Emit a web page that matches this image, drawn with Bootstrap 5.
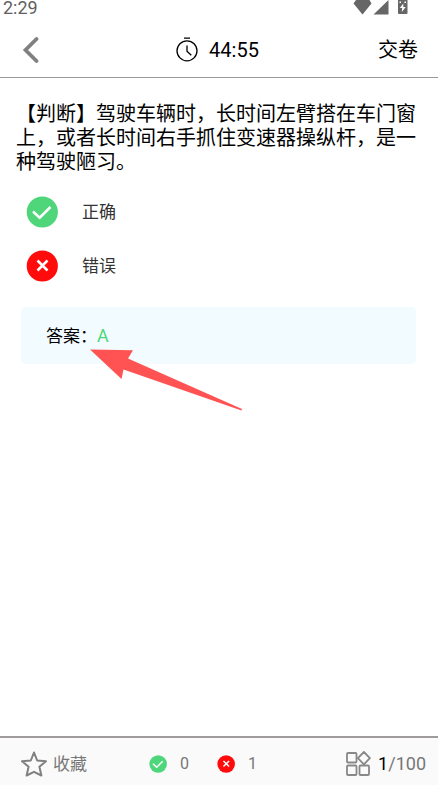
<!DOCTYPE html>
<html lang="zh-CN">
<head>
<meta charset="utf-8">
<meta name="viewport" content="width=device-width, initial-scale=1">
<title>模拟考试</title>
<link href="https://cdn.jsdelivr.net/npm/bootstrap@5.3.0/dist/css/bootstrap.min.css" rel="stylesheet">
<style>
body { font-family: Roboto, "Noto Sans CJK SC", sans-serif; color: #000; background: #fff; }
svg { display: block; flex: none; }
.plain-btn { background: none; border: 0; padding: 0; color: inherit; text-align: left; }
.status-bar { height: 22px; padding: 0 30px 0 3px; color: #606060; font-size: 18px; line-height: 16px; }
.exam-head { height: 56px; padding: 0 20px 0 17px; border-bottom: 1px solid #999; font-size: 20px; line-height: 24px; }
.side { flex: 1 1 0; }
.back { padding-left: 5px; }
.timer { gap: 11px; }
.exam-body { padding: 24px 22px 0 16px; }
.question { font-size: 20px; line-height: 24px; margin-bottom: 11px; }
.option { height: 54px; padding-left: 10px; gap: 24px; font-size: 17px; color: #333; }
.option span { padding-top: 2px; }
.answer { margin: 14px 0 0 5px; padding: 17px 25px 16px; background: #f2fbff; border-radius: 5px; font-size: 17px; line-height: 24px; }
.green { color: #4fd67a; font-size: 18px; }
.pointer { left: 69px; top: 42px; }
.exam-foot { height: 49px; padding: 4px 12px 0 20px; background: #fafafa; border-top: 2px solid #9f9a9b; color: #777; font-size: 17px; line-height: 24px; }
.fav { gap: 5px; }
.counts { gap: 28px; margin-right: 26px; padding-top: 1px; }
.count { font-size: 16px; gap: 13px; }
.pages { font-size: 18px; gap: 7px; }
</style>
<script defer src="https://cdn.jsdelivr.net/npm/bootstrap@5.3.0/dist/js/bootstrap.bundle.min.js"></script>
</head>
<body class="d-flex flex-column min-vh-100">
<svg class="d-none" aria-hidden="true">
  <symbol id="ok" viewBox="0 0 32 32"><circle cx="16.300" cy="16" r="15.600" fill="#4fd67a"/><path d="M7 15.500l6.700 6.200L24.500 11" fill="none" stroke="#fff" stroke-width="2.500"/></symbol>
  <symbol id="no" viewBox="0 0 32 32"><circle cx="16.300" cy="16" r="15.600" fill="#ff0b0b"/><path d="M11.500 10.500l10 10m0-10l-10 10" fill="none" stroke="#fff" stroke-width="2.600"/></symbol>
</svg>

<div class="status-bar d-flex justify-content-between">
  <span>2:29</span>
  <svg width="55" height="16" viewBox="0 0 55 16" fill="#666" aria-hidden="true">
    <path d="M3 0h13.500l2 3.500L9.500 14.500 .5 3.500z"/>
    <path d="M20.500 14.500L35.500 0v14.500z"/>
    <path d="M45 0h9.500v13a1 1 0 0 1-1 1h-7.500a1 1 0 0 1-1-1z"/><path d="M50.300 3.500L46.800 8h2.400l-.4 4L52.700 7h-2.400z" fill="#fff"/><path d="M46.500 1.500h1.500V3h-1.500zM51.500 1.500H53V3h-1.500z" fill="#fff"/>
  </svg>
</div>

<header class="exam-head d-flex align-items-center">
  <div class="side d-flex">
    <button type="button" class="plain-btn back" aria-label="返回">
      <svg width="18" height="26" viewBox="0 0 18 26"><path d="M14.500 2L3.500 13l11 11" fill="none" stroke="#808080" stroke-width="3.800" stroke-linecap="round"/></svg>
    </button>
  </div>
  <div class="timer d-flex align-items-center">
    <svg width="22" height="26" viewBox="0 0 22 26" fill="none" stroke="#000" stroke-width="1.300" aria-hidden="true"><circle cx="11" cy="13.800" r="10"/><path d="M8 1.200h6M11 8.500v5.800l4.300 4"/></svg>
    <span>44:55</span>
  </div>
  <div class="side text-end"><button type="button" class="plain-btn">交卷</button></div>
</header>

<main class="exam-body flex-grow-1">
  <p class="question">【判断】驾驶车辆时，长时间左臂搭在车门窗上，或者长时间右手抓住变速器操纵杆，是一种驾驶陋习。</p>
  <button type="button" class="plain-btn option d-flex align-items-center w-100"><svg width="32" height="32"><use href="#ok"/></svg><span>正确</span></button>
  <button type="button" class="plain-btn option d-flex align-items-center w-100"><svg width="32" height="32"><use href="#no"/></svg><span>错误</span></button>
  <div class="answer position-relative">答案：<span class="green">A</span>
    <svg class="pointer position-absolute" width="154" height="62" viewBox="0 0 154 62" aria-hidden="true"><path d="M0 0.500L43 1.200 38 9.500 152 60 151.500 61.500 33.500 20.500 31.500 30z" fill="#ff5353"/></svg>
  </div>
</main>

<footer class="exam-foot d-flex align-items-center justify-content-between">
  <button type="button" class="plain-btn fav d-flex align-items-center">
    <svg width="28" height="28" viewBox="0 0 28 28" fill="none" stroke="#808080" stroke-width="2" stroke-linejoin="round"><path d="M14 2.500l3.200 8 8.800.7-6.600 5.600 2 8.700-7.400-3.700-7.400 3.700 2-8.700L2 11.200l8.800-.7z"/></svg>
    <span>收藏</span>
  </button>
  <div class="counts d-flex">
    <span class="count d-flex align-items-center"><svg width="18" height="18" aria-label="答对"><use href="#ok"/></svg>0</span>
    <span class="count d-flex align-items-center"><svg width="18" height="18" aria-label="答错"><use href="#no"/></svg>1</span>
  </div>
  <button type="button" class="plain-btn pages d-flex align-items-center">
    <svg width="26" height="26" viewBox="0 0 26 26" fill="none" stroke="#888" stroke-width="1.800" stroke-linejoin="round"><rect x="2" y="2" width="9.500" height="9.500" rx="1"/><rect x="2" y="14.500" width="9.500" height="9.500" rx="1"/><rect x="14.500" y="14.500" width="9.500" height="9.500" rx="1"/><path d="M18.900 1l6 6.200-6 6.200-6-6.200z"/></svg>
    <span><span class="text-black">1</span>/100</span>
  </button>
</footer>
</body>
</html>
